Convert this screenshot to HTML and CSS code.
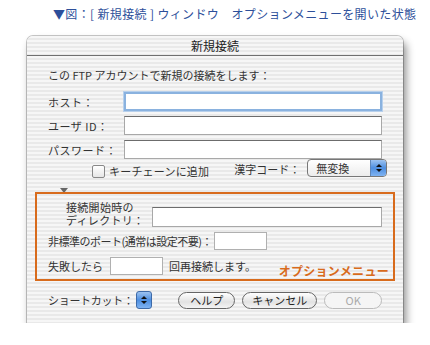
FILE: index.html
```html
<!DOCTYPE html>
<html lang="ja">
<head>
    <meta charset="UTF-8">
    <title>新規接続</title>
    <link rel="stylesheet" href="styles.css">
</head>
<body>
    <div class="caption">▼図：[ 新規接続 ] ウィンドウ　オプションメニューを開いた状態</div>
    <div class="window">
        <div class="titlebar">新規接続</div>
        <div class="content">
            <p class="intro">この FTP アカウントで新規の接続をします：</p>
            <div class="row">
                <span class="label">ホスト：</span>
                <span class="field focus"></span>
            </div>
            <div class="row">
                <span class="label">ユーザ ID：</span>
                <span class="field"></span>
            </div>
            <div class="row">
                <span class="label">パスワード：</span>
                <span class="field"></span>
            </div>
            <div class="row check-row">
                <span class="checkbox"></span>
                <span class="check-label">キーチェーンに追加</span>
                <span class="kanji-label">漢字コード：</span>
                <span class="popup">
                    <span class="popup-text">無変換</span>
                    <span class="arrows"><span class="up"></span><span class="down"></span></span>
                </span>
            </div>
            <div class="disclosure"></div>
            <div class="options">
                <div class="row dir-row">
                    <span class="dir-label">接続開始時の<br>ディレクトリ：</span>
                    <span class="field"></span>
                </div>
                <div class="row port-row">
                    <span class="label-auto port-label">非標準のポート(通常は設定不要)：</span>
                    <span class="field short port"></span>
                </div>
                <div class="row retry-row">
                    <span class="label-auto">失敗したら</span>
                    <span class="field short retry"></span>
                    <span class="label-auto">回再接続します。</span>
                    <span class="note">オプションメニュー</span>
                </div>
            </div>
            <div class="row bottom">
                <span class="label-auto shortcut">ショートカット：</span>
                <span class="stepper"><span class="up"></span><span class="down"></span></span>
                <span class="btn help">ヘルプ</span>
                <span class="btn cancel">キャンセル</span>
                <span class="btn disabled">OK</span>
            </div>
        </div>
    </div>
</body>
</html>
```
FILE: styles.css
```css
body {
    margin: 0;
    background: #fff;
    font-family: "Noto Sans CJK JP", "Noto Sans", sans-serif;
    color: #333;
}
.caption {
    height: 36px;
    padding-left: 53px;
    box-sizing: border-box;
    padding-top: 6px;
    font-size: 12px;
    line-height: 16px;
    color: #2d4f9a;
    letter-spacing: 0.35px;
    white-space: nowrap;
}
.window {
    margin-left: 27px;
    width: 376px;
    height: 287px;
    border-radius: 6px 6px 0 0;
    background: repeating-linear-gradient(#f6f6f6 0 2px, #e9e9e9 2px 4px);
    box-shadow: 3px 6px 8px rgba(0, 0, 0, 0.45), 0 0 0 1px #c8c8c8;
}
.titlebar {
    height: 19px;
    border-bottom: 1px solid #707070;
    text-align: center;
    font-size: 12px;
    line-height: 20px;
    color: #222;
}
.content {
    padding: 0 21px;
}
.intro {
    margin: 0;
    padding-top: 11px;
    height: 25px;
    font-size: 11px;
    line-height: 16px;
    white-space: nowrap;
}
.row {
    display: flex;
    align-items: center;
    height: 19px;
    margin-bottom: 5px;
    font-size: 11px;
    white-space: nowrap;
}
.label {
    width: 76px;
    letter-spacing: 0.5px;
}
.label-auto {
    white-space: nowrap;
}
.field {
    flex: 1;
    height: 19px;
    box-sizing: border-box;
    background: #fff;
    border: 1px solid #a8a8a8;
    border-top-color: #6c6c6c;
}
.field.focus {
    border: 2px solid #8ab2df;
    box-shadow: 0 0 0 1px #b7d0ec;
}
.check-row {
    margin-top: 3px;
    height: 18px;
    align-items: flex-start;
}
.checkbox {
    flex: none;
    width: 11px;
    height: 11px;
    margin: 1px 0 0 44px;
    border: 1px solid #888;
    border-radius: 2px;
    background: linear-gradient(#fff, #e6e6e6);
}
.check-label {
    margin-left: 4px;
    font-size: 11px;
    line-height: 14px;
    letter-spacing: 0.2px;
}
.kanji-label {
    margin: -2px 0 0 25px;
    line-height: 14px;
}
.popup {
    display: flex;
    flex: none;
    margin: -5px 0 0 7px;
    width: 80px;
    height: 18px;
    box-sizing: border-box;
    border: 1px solid #777;
    border-radius: 4px;
    background: linear-gradient(#fff, #ececec);
    overflow: hidden;
}
.popup-text {
    flex: 1;
    padding-left: 8px;
    line-height: 16px;
    font-size: 11px;
}
.arrows, .stepper {
    width: 15px;
    display: flex;
    flex-direction: column;
    align-items: center;
    justify-content: center;
    gap: 2px;
    background: linear-gradient(#9dc3f0, #4d8ee0 50%, #7fb3f2);
}
.arrows {
    border-left: 1px solid #5f86b8;
}
.stepper {
    width: 15px;
    height: 16px;
    margin-left: 2px;
    border: 1px solid #3d6aa8;
    border-radius: 3px;
}
.up {
    border: 3px solid transparent;
    border-top: 0;
    border-bottom: 3px solid #111;
}
.down {
    border: 3px solid transparent;
    border-bottom: 0;
    border-top: 3px solid #111;
}
.disclosure {
    margin: 6px 0 0 12px;
    width: 0;
    height: 0;
    border: 4px solid transparent;
    border-bottom: 0;
    border-top: 5px solid #666;
}
.options {
    margin: -1px -13px 0;
    height: 89px;
    box-sizing: border-box;
    border: 2.5px solid #d86b1c;
    padding: 5.5px 11px 0 11px;
}
.dir-row {
    height: 27px;
    margin-bottom: 5px;
    align-items: flex-end;
}
.dir-row .field {
    height: 20px;
}
.dir-label {
    width: 104px;
    padding-left: 18px;
    box-sizing: border-box;
    line-height: 13px;
    font-size: 11px;
    letter-spacing: 0.3px;
}
.port-row {
    height: 18px;
    margin-bottom: 7px;
}
.port-label {
    letter-spacing: -0.5px;
}
.retry-row {
    height: 18px;
    margin-bottom: 0;
}
.field.short {
    flex: none;
    width: 53px;
    height: 18px;
    border-color: #b0b0b0;
}
.port {
    margin-left: 2px;
}
.retry {
    margin: 0 6px 0 7px;
}
.note {
    margin: 0 -7px -4px auto;
    align-self: flex-end;
    color: #d86b1c;
    font-weight: bold;
    font-size: 12px;
    line-height: 16px;
    letter-spacing: 0.3px;
}
.bottom {
    margin-top: 10px;
    height: 18px;
}
.shortcut {
    letter-spacing: -0.3px;
}
.btn {
    height: 17px;
    box-sizing: border-box;
    border: 1px solid #666;
    border-radius: 9px;
    background: linear-gradient(#fff, #e2e2e2 60%, #f4f4f4);
    line-height: 15px;
    text-align: center;
    font-size: 11px;
    color: #222;
    width: 57px;
    margin-left: 7px;
}
.btn.help {
    margin-left: 26px;
}
.btn.cancel {
    width: 76px;
}
.btn.disabled {
    width: 58px;
    color: #aaa;
    border-color: #bbb;
    background: #f5f5f5;
}
```
